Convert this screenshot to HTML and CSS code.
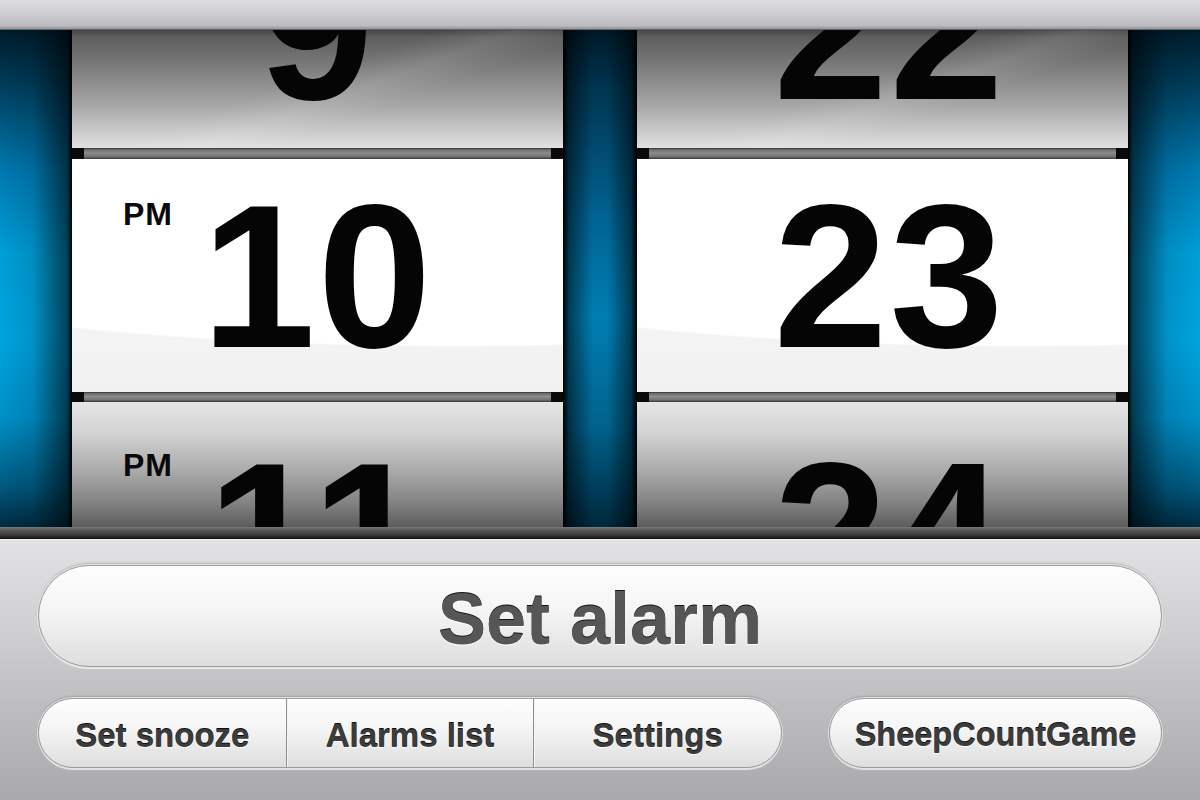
FILE: index.html
```html
<!DOCTYPE html>
<html lang="en">
<head>
<meta charset="utf-8">
<title>Alarm clock</title>
<link rel="stylesheet" href="styles.css">
</head>
<body>
<div class="screen">
  <header class="topbar"></header>
  <main class="wheels">
    <div class="rail rail-left"></div>
    <section class="reel">
      <div class="card card-prev"><span class="num">9</span></div>
      <div class="sep"></div>
      <div class="card card-cur"><span class="ampm">PM</span><span class="num">10</span></div>
      <div class="sep"></div>
      <div class="card card-next"><span class="ampm ampm-next">PM</span><span class="num">11</span></div>
    </section>
    <div class="rail rail-mid"></div>
    <section class="reel reel-min">
      <div class="card card-prev"><span class="num">22</span></div>
      <div class="sep"></div>
      <div class="card card-cur"><span class="num">23</span></div>
      <div class="sep"></div>
      <div class="card card-next"><span class="num">24</span></div>
    </section>
    <div class="rail rail-right"></div>
  </main>
  <div class="ledge"></div>
  <footer class="panel">
    <button class="btn btn-main">Set alarm</button>
    <div class="row">
      <div class="btn seg">
        <button class="seg-item">Set snooze</button>
        <button class="seg-item">Alarms list</button>
        <button class="seg-item">Settings</button>
      </div>
      <button class="btn btn-game">SheepCountGame</button>
    </div>
  </footer>
</div>
</body>
</html>
```

FILE: styles.css
```css
* { box-sizing: border-box; }
html, body { margin: 0; padding: 0; }
body {
  width: 1200px;
  height: 800px;
  overflow: hidden;
  font-family: "Liberation Sans", Arial, sans-serif;
  background: #b0b0b2;
}
.screen {
  width: 1200px;
  height: 800px;
  display: flex;
  flex-direction: column;
}

/* top bar */
.topbar {
  height: 30px;
  flex: none;
  background: linear-gradient(#dcdce0 0, #d0d0d4 40%, #bcbcc0 85%, #9a9a9e 95%, #4a4a4c 100%);
}

/* wheels */
.wheels {
  height: 497px;
  flex: none;
  display: grid;
  grid-template-columns: 72px 491px 74px 491px 72px;
}
.rail-left {
  background:
    linear-gradient(to right, rgba(0,0,0,0) 0, rgba(0,0,0,0.1) 45%, rgba(0,0,0,0.6) 94%, #000 100%),
    linear-gradient(#001c2c 0, #003a56 10%, #0078b0 28%, #009ed8 45%, #00a4e0 62%, #0090c8 78%, #00587e 92%, #002a40 100%);
}
.rail-right {
  background:
    linear-gradient(to left, rgba(0,0,0,0) 0, rgba(0,0,0,0.1) 45%, rgba(0,0,0,0.6) 94%, #000 100%),
    linear-gradient(#001c2c 0, #003a56 10%, #0078b0 28%, #009ed8 45%, #00a4e0 62%, #0090c8 78%, #00587e 92%, #002a40 100%);
}
.rail-mid {
  background:
    linear-gradient(to right, #000 0, rgba(0,0,0,0.55) 8%, rgba(0,0,0,0.08) 40%, rgba(0,0,0,0.08) 60%, rgba(0,0,0,0.55) 92%, #000 100%),
    linear-gradient(#001a2a 0, #003a58 12%, #0070a4 40%, #0088c0 58%, #006a98 80%, #002a40 100%);
}

.reel {
  display: flex;
  flex-direction: column;
}
.card {
  position: relative;
  overflow: hidden;
  flex: none;
}
.card-prev {
  height: 118px;
  background:
    linear-gradient(160deg, rgba(255,255,255,0) 45%, rgba(255,255,255,0.1) 55%, rgba(255,255,255,0) 65%),
    linear-gradient(#444 0, #5e5e5e 6%, #7a7a7a 30%, #a8a8a8 65%, #d4d4d4 92%, #e0e0e0 100%);
}
.card-cur {
  height: 233px;
  background:
    radial-gradient(ellipse 820px 160px at 78% 12%, #ffffff 99%, rgba(255,255,255,0) 100%),
    linear-gradient(#e8e8e8 0, #f6f6f6 6%, #f5f5f5 60%, #f1f1f1 100%);
}
.card-next {
  height: 125px;
  background: linear-gradient(#e6e6e6 0, #d2d2d2 25%, #aaaaaa 55%, #808080 82%, #5c5c5c 100%);
}
.sep {
  flex: none;
  height: 11px;
  background:
    linear-gradient(to right, #0a0a0a 0, #0a0a0a 12px, rgba(0,0,0,0) 12px, rgba(0,0,0,0) calc(100% - 12px), #0a0a0a calc(100% - 12px)),
    linear-gradient(#2e2e2e 0, #6c6c6c 15%, #8c8c8c 45%, #767676 75%, #3a3a3a 100%);
}
.card-cur + .sep { height: 10px; }

.num {
  display: block;
  text-align: center;
  font-family: "Liberation Sans", Arial, sans-serif;
  font-weight: 700;
  font-size: 205px;
  line-height: 1;
  color: #050505;
  letter-spacing: 2px;
}
.reel-min .num { padding-left: 14px; }
.card-prev .num { margin-top: -105px; }
.card-cur .num { margin-top: 14px; }
.card-next .num { margin-top: 29px; }

.ampm {
  position: absolute;
  left: 51px;
  top: 39px;
  font-weight: 700;
  font-size: 32px;
  line-height: 1;
  color: #0a0a0a;
  letter-spacing: 1px;
}
.ampm.ampm-next { top: 47px; }

/* ledge under wheels */
.ledge {
  height: 12px;
  flex: none;
  background: linear-gradient(#7a7a7a 0, #555 30%, #3a3a3a 70%, #1e1e1e 88%, #0c0c0c 100%);
}

/* bottom panel */
.panel {
  flex: 1;
  padding: 26px 38px 0 38px;
  display: flex;
  flex-direction: column;
  gap: 31px;
  background: linear-gradient(#e2e2e4 0, #d2d2d4 30%, #bdbdc0 65%, #a9a9ac 100%);
  box-shadow: inset 0 1px 0 #f2f2f2;
}
.btn {
  border: 1px solid #9c9c9e;
  border-radius: 60px;
  background: linear-gradient(#fdfdfd 0, #f6f6f6 40%, #e8e8e8 75%, #dedede 100%);
  box-shadow:
    0 0 0 1px #e4e4e6,
    0 -2px 2px rgba(0,0,0,0.18),
    0 2px 1px rgba(255,255,255,0.7),
    inset 0 1px 0 #ffffff;
  font-family: "Liberation Sans", Arial, sans-serif;
  font-weight: 700;
  padding: 0;
  margin: 0;
  color: #4a4a4a;
}
.btn-main {
  height: 102px;
  width: 100%;
  font-size: 72px;
  color: #565656;
  text-shadow: 0 -1px 0 #151515, 0 1px 0 rgba(255,255,255,0.95);
  padding-top: 6px;
}
.row {
  display: flex;
  align-items: center;
  height: 70px;
}
.seg {
  width: 744px;
  height: 70px;
  display: flex;
  overflow: hidden;
}
.seg-item {
  flex: 1;
  height: 100%;
  border: 0;
  background: transparent;
  font-family: "Liberation Sans", Arial, sans-serif;
  font-weight: 700;
  font-size: 33px;
  color: #3c3c3c;
  text-shadow: 0 -1px 0 #0e0e0e, 0 1px 0 rgba(255,255,255,0.9);
  padding: 5px 0 0 0;
  margin: 0;
}
.seg-item + .seg-item {
  border-left: 1px solid #8e8e90;
  box-shadow: inset 1px 0 0 #f4f4f4;
}
.btn-game {
  margin-left: auto;
  width: 333px;
  height: 70px;
  font-size: 32.5px;
  padding-top: 5px;
  color: #3c3c3c;
  text-shadow: 0 -1px 0 #0e0e0e, 0 1px 0 rgba(255,255,255,0.9);
}
```
